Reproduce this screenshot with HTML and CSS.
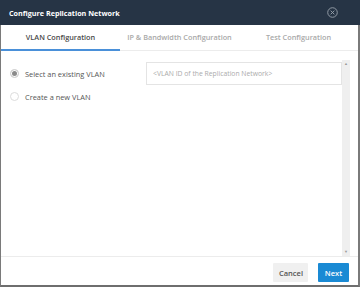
FILE: index.html
```html
<!DOCTYPE html>
<html>
<head>
  <title>Configure Replication Network</title>
  <link rel="stylesheet" href="styles.css">
</head>
<body>
  <div class="dialog">
    <div class="dialog-header">
      <span class="dialog-title">Configure Replication Network</span>
      <svg class="close-icon" width="11" height="11" viewBox="0 0 12 12">
        <circle cx="6" cy="6" r="5.2" fill="none" stroke="#9aa3ad" stroke-width="1"/>
        <path d="M4 4 L8 8 M8 4 L4 8" stroke="#9aa3ad" stroke-width="1"/>
      </svg>
    </div>

    <div class="tabs">
      <div class="tab active">VLAN Configuration</div>
      <div class="tab">IP &amp; Bandwidth Configuration</div>
      <div class="tab">Test Configuration</div>
    </div>

    <div class="dialog-body">
      <div class="scroll-area">
        <div class="form-rows">
          <div class="form-row">
            <label class="radio-option">
              <span class="radio checked"></span>
              <span>Select an existing VLAN</span>
            </label>
            <input type="text" class="vlan-input" placeholder="<VLAN ID of the Replication Network>">
          </div>
          <div class="form-row">
            <label class="radio-option">
              <span class="radio"></span>
              <span>Create a new VLAN</span>
            </label>
          </div>
        </div>
        <div class="scrollbar">
          <span class="arrow">&#9650;</span>
          <span class="arrow">&#9660;</span>
        </div>
      </div>
    </div>

    <div class="dialog-footer">
      <button class="btn btn-cancel">Cancel</button>
      <button class="btn btn-next">Next</button>
    </div>
  </div>
</body>
</html>
```

FILE: styles.css
```css
body {
  margin: 0;
  font-family: "Open Sans", sans-serif;
  background-color: #ffffff;
}

.dialog {
  width: 360px;
  height: 287px;
  box-sizing: border-box;
  display: flex;
  flex-direction: column;
  border-left: 1px solid #7a7a7a;
  border-right: 2px solid #7a7a7a;
  border-bottom: 2px solid #6e6e6e;
}

.dialog-header {
  height: 25px;
  background-color: #263445;
  display: flex;
  align-items: center;
  justify-content: space-between;
  padding: 0 22px 0 9px;
  margin: 0 -2px 0 -1px;
}

.dialog-title {
  color: #ffffff;
  font-size: 7.2px;
  font-weight: 700;
}

.close-icon {
  display: block;
}

.tabs {
  display: flex;
  height: 25px;
  border-bottom: 1px solid #ececec;
}

.tab {
  flex: 1 1 0;
  min-width: 0;
  white-space: nowrap;
  display: flex;
  align-items: center;
  justify-content: center;
  font-size: 7.3px;
  font-weight: 600;
  color: #a9a9a9;
  margin-bottom: -1px;
  border-bottom: 2px solid transparent;
}

.tab.active {
  color: #4a4a4a;
  border-bottom-color: #4a90d9;
}

.dialog-body {
  flex: 1;
  padding: 11px 8px 0 9px;
  border-bottom: 1px solid #ececec;
}

.scroll-area {
  display: flex;
  height: 194px;
}

.form-rows {
  flex: 1;
}

.form-row {
  display: flex;
  align-items: center;
  height: 23px;
}

.radio-option {
  display: flex;
  align-items: center;
  width: 136px;
  font-size: 7.4px;
  color: #555555;
}

.radio {
  width: 7px;
  height: 7px;
  border: 1px solid #dcdcdc;
  border-radius: 50%;
  margin-right: 6px;
  box-sizing: content-box;
}

.radio.checked {
  background-color: #8a8a8a;
  border-color: #dcdcdc;
  box-shadow: inset 0 0 0 1px #ffffff;
}

.vlan-input {
  flex: 1;
  height: 23px;
  box-sizing: border-box;
  border: 1px solid #e4e4e4;
  padding: 0 6px;
  font-family: "Open Sans", sans-serif;
  font-size: 6.8px;
  outline: none;
}

.vlan-input::placeholder {
  color: #ababab;
}

.scrollbar {
  width: 8px;
  background-color: #efefef;
  display: flex;
  flex-direction: column;
  justify-content: space-between;
  align-items: center;
  margin-top: -2px;
}

.arrow {
  font-size: 4px;
  color: #9a9a9a;
  line-height: 8px;
}

.dialog-footer {
  display: flex;
  justify-content: flex-end;
  gap: 10px;
  padding: 6px 9px 0 0;
  height: 28px;
  box-sizing: border-box;
}

.btn {
  height: 19px;
  border: none;
  border-radius: 1px;
  font-family: "Open Sans", sans-serif;
  font-size: 7.5px;
  font-weight: 600;
  cursor: pointer;
}

.btn-cancel {
  width: 35px;
  background-color: #f0f0f0;
  color: #555555;
}

.btn-next {
  width: 31px;
  background-color: #1a8ad4;
  color: #ffffff;
}
```
